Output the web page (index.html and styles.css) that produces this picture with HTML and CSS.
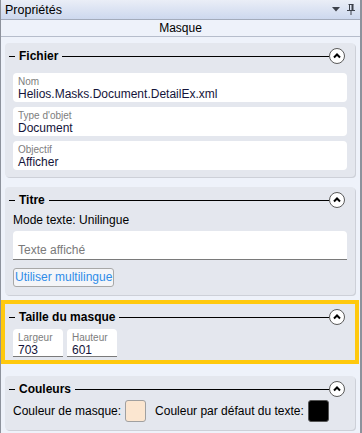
FILE: index.html
```html
<!DOCTYPE html>
<html lang="fr">
<head>
  <meta charset="UTF-8">
  <title>Propriétés</title>
  <link rel="stylesheet" href="styles.css">
</head>
<body>
  <div class="window">
    <div class="titlebar">
      <span class="title">Propriétés</span>
      <div class="tb-icons">
        <svg class="tb-drop" width="8" height="5" viewBox="0 0 8 5"><polygon points="0,0 8,0 4,4.5" fill="#3c414b"/></svg>
        <svg class="tb-pin" width="8" height="11" viewBox="0 0 8 11"><path d="M1.5 0.5h5 M2.5 0.5v5.5 M0 6.5h8 M4 6.5v4.5" stroke="#3c414b" stroke-width="1" fill="none"/><rect x="4.5" y="0.5" width="2" height="5.5" fill="#3c414b"/></svg>
      </div>
    </div>
    <div class="subhead">Masque</div>

    <div class="content">
      <section class="panel">
        <div class="phead">
          <span class="dash"></span><span class="ptitle">Fichier</span><span class="rule"></span>
          <span class="collapse"><svg width="16" height="16" viewBox="0 0 16 16"><circle cx="8" cy="8" r="7.5" fill="#fff" stroke="#5a5a5a"/><polyline points="5,9.5 8,6.5 11,9.5" fill="none" stroke="#000" stroke-width="2"/></svg></span>
        </div>
        <div class="fields">
          <div class="field"><div class="flabel">Nom</div><div class="fvalue">Helios.Masks.Document.DetailEx.xml</div></div>
          <div class="field"><div class="flabel">Type d'objet</div><div class="fvalue">Document</div></div>
          <div class="field"><div class="flabel">Objectif</div><div class="fvalue">Afficher</div></div>
        </div>
      </section>

      <section class="panel panel-titre">
        <div class="phead">
          <span class="dash"></span><span class="ptitle">Titre</span><span class="rule"></span>
          <span class="collapse"><svg width="16" height="16" viewBox="0 0 16 16"><circle cx="8" cy="8" r="7.5" fill="#fff" stroke="#5a5a5a"/><polyline points="5,9.5 8,6.5 11,9.5" fill="none" stroke="#000" stroke-width="2"/></svg></span>
        </div>
        <div class="mode">Mode texte: Unilingue</div>
        <div class="input"><span class="placeholder">Texte affiché</span></div>
        <div class="btn-row"><span class="btn">Utiliser multilingue</span></div>
      </section>

      <div class="selected">
        <section class="panel panel-taille">
          <div class="phead">
            <span class="dash"></span><span class="ptitle">Taille du masque</span><span class="rule"></span>
            <span class="collapse"><svg width="16" height="16" viewBox="0 0 16 16"><circle cx="8" cy="8" r="7.5" fill="#fff" stroke="#5a5a5a"/><polyline points="5,9.5 8,6.5 11,9.5" fill="none" stroke="#000" stroke-width="2"/></svg></span>
          </div>
          <div class="size-row">
            <div class="field small"><div class="flabel">Largeur</div><div class="fvalue">703</div></div>
            <div class="field small"><div class="flabel">Hauteur</div><div class="fvalue">601</div></div>
          </div>
        </section>
      </div>

      <section class="panel panel-couleurs">
        <div class="phead">
          <span class="dash"></span><span class="ptitle">Couleurs</span><span class="rule"></span>
          <span class="collapse"><svg width="16" height="16" viewBox="0 0 16 16"><circle cx="8" cy="8" r="7.5" fill="#fff" stroke="#5a5a5a"/><polyline points="5,9.5 8,6.5 11,9.5" fill="none" stroke="#000" stroke-width="2"/></svg></span>
        </div>
        <div class="color-row">
          <span>Couleur de masque:</span><span class="swatch peach"></span>
          <span class="second">Couleur par défaut du texte:</span><span class="swatch black"></span>
        </div>
      </section>
    </div>
  </div>
</body>
</html>
```

FILE: styles.css
```css
body {
  margin: 0;
  font-family: "Liberation Sans", Arial, sans-serif;
  font-size: 12px;
  color: #000;
  background: #eef2fa;
}
.window {
  width: 362px;
  height: 433px;
  box-sizing: border-box;
  border-left: 1px solid #8d929c;
  border-right: 2px solid #8d929c;
  background: #eef2fa;
  overflow: hidden;
}
.titlebar {
  height: 19px;
  border-bottom: 1px solid #a3abbb;
  background: linear-gradient(#eaeef7, #cdd8ee);
  display: flex;
  align-items: center;
  justify-content: space-between;
  padding: 0 4px;
}
.title {
  font-size: 12.5px;
  line-height: 19px;
  padding-top: 2px;
}
.tb-icons {
  display: flex;
  align-items: center;
  gap: 7px;
  padding-right: 1px;
}
.subhead {
  height: 16px;
  line-height: 17px;
  text-align: center;
  border-bottom: 1px solid #b6bdcb;
}
.content {
  padding: 6px 5px 0 4px;
}
.panel {
  width: 350px;
  box-sizing: border-box;
  background: #e4e7ee;
  border-radius: 4px;
  box-shadow: 1px 1px 0 #cdd0d8;
  padding: 4px 8px 7px;
}
.phead {
  height: 18px;
  display: flex;
  align-items: center;
  margin: 0 2px 0 -4px;
}
.dash {
  width: 6px;
  border-top: 1px solid #000;
  margin-right: 4px;
}
.ptitle {
  font-weight: bold;
  font-size: 12px;
}
.rule {
  flex: 1;
  border-top: 1px solid #000;
  margin-left: 4px;
}
.collapse {
  display: flex;
}
.fields {
  margin-top: 8px;
  display: flex;
  flex-direction: column;
  gap: 5px;
}
.field {
  background: #fff;
  border-radius: 4px;
  height: 29px;
  box-sizing: border-box;
  padding: 3px 5px 0;
}
.flabel {
  font-size: 10px;
  line-height: 11px;
  color: #7d7d7d;
}
.fvalue {
  font-size: 12px;
  line-height: 15px;
  color: #14143a;
}
.panel-titre {
  margin-top: 10px;
  padding-bottom: 8px;
}
.mode {
  margin-top: 3px;
  line-height: 16px;
}
.input {
  margin-top: 3px;
  height: 29px;
  box-sizing: border-box;
  background: #fff;
  border-radius: 4px 4px 0 0;
  border-bottom: 1px solid #7a7a7a;
  padding: 11px 5px 0;
}
.placeholder {
  display: block;
  line-height: 16px;
  color: #7a7a7a;
}
.btn-row {
  margin-top: 8px;
  display: flex;
}
.btn {
  height: 19px;
  box-sizing: border-box;
  border: 1px solid #a8a8a8;
  border-radius: 3px;
  background: #f4f5f8;
  color: #2f8ce8;
  line-height: 17px;
  padding: 0 1px;
}
.selected {
  width: 358px;
  box-sizing: border-box;
  border: 4px solid #ffc90e;
  margin: 5px 0 12px -4px;
}
.panel-taille {
  padding-bottom: 3px;
  box-shadow: none;
  border-radius: 0;
}
.size-row {
  margin-top: 3px;
  display: flex;
  gap: 4px;
}
.field.small {
  width: 50px;
  height: 28px;
  border-radius: 4px 4px 0 0;
  border-bottom: 1px solid #7a7a7a;
}
.panel-couleurs {
  padding-bottom: 8px;
}
.color-row {
  margin-top: 2px;
  display: flex;
  align-items: center;
}
.swatch {
  width: 21px;
  height: 22px;
  box-sizing: border-box;
  border-radius: 3px;
  margin-left: 4px;
}
.swatch.peach {
  background: #fbe6d0;
  border: 1px solid #a0a0a0;
}
.swatch.black {
  background: #000;
  border: 1px solid #555;
}
.second {
  margin-left: 9px;
}
```
